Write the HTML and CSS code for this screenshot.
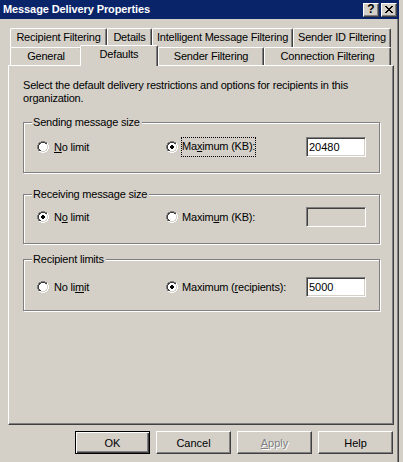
FILE: index.html
```html
<!DOCTYPE html>
<html lang="en">

<head>
    <meta charset="UTF-8">
    <title>Message Delivery Properties</title>
    <link rel="stylesheet" href="styles.css">
</head>

<body>
    <svg class="defs" width="0" height="0">
        <symbol id="radio" viewBox="0 0 12 12">
            <path fill="#808080" d="M4 0h4v1h-4z M2 1h2v1h-2z M8 1h2v1h-2z M1 2h1v2h-1z M0 4h1v4h-1z M1 8h1v2h-1z" />
            <path fill="#ffffff" d="M10 2h1v2h-1z M11 4h1v4h-1z M10 8h1v2h-1z M2 10h2v1h-2z M8 10h2v1h-2z M4 11h4v1h-4z" />
            <path fill="#404040" d="M4 1h4v1h-4z M2 2h2v1h-2z M8 2h2v1h-2z M2 3h1v1h-1z M1 4h1v4h-1z M2 8h1v1h-1z M2 9h2v1h-2z" />
            <path fill="#d4d0c8" d="M9 3h1v1h-1z M10 4h1v4h-1z M9 8h1v1h-1z M8 9h2v1h-2z M4 10h4v1h-4z" />
            <path fill="#ffffff" d="M4 2h4v1h-4z M3 3h6v1h-6z M2 4h8v4h-8z M3 8h6v1h-6z M4 9h4v1h-4z" />
        </symbol>
        <symbol id="dot" viewBox="0 0 12 12">
            <path fill="#000" d="M5 4h2v1h-2z M4 5h4v2h-4z M5 7h2v1h-2z" />
        </symbol>
    </svg>

    <div class="window">
        <div class="titlebar">
            <span class="title">Message Delivery Properties</span>
            <div class="caption-btns">
                <span class="cbtn help-btn">?</span>
                <span class="cbtn">
                    <svg width="8" height="7" viewBox="0 0 8 7" shape-rendering="crispEdges">
                        <path fill="#000" d="M0 0h2v1h-2z M6 0h2v1h-2z M1 1h2v1h-2z M5 1h2v1h-2z M2 2h4v1h-4z M3 3h2v1h-2z M2 4h4v1h-4z M1 5h2v1h-2z M5 5h2v1h-2z M0 6h2v1h-2z M6 6h2v1h-2z" />
                    </svg>
                </span>
            </div>
        </div>

        <div class="content">
            <div class="tabs">
                <div class="tab-row">
                    <div class="tab w-recip">Recipient Filtering</div>
                    <div class="tab w-details">Details</div>
                    <div class="tab w-imf">Intelligent Message Filtering</div>
                    <div class="tab w-senderid">Sender ID Filtering</div>
                </div>
                <div class="tab-row front">
                    <div class="tab w-general">General</div>
                    <div class="tab selected w-defaults">Defaults</div>
                    <div class="tab w-sender">Sender Filtering</div>
                    <div class="tab w-conn">Connection Filtering</div>
                </div>
            </div>

            <div class="panel">
                <p class="desc">Select the default delivery restrictions and options for recipients in this<br>organization.</p>

                <div class="group group-send">
                    <span class="legend">Sending message size</span>
                    <div class="group-row">
                        <label class="opt opt-first">
                            <svg class="radio" width="12" height="12" shape-rendering="crispEdges"><use href="#radio" /></svg>
                            <span><u>N</u>o limit</span>
                        </label>
                        <label class="opt opt-second">
                            <svg class="radio" width="12" height="12" shape-rendering="crispEdges"><use href="#radio" /><use href="#dot" /></svg>
                            <span class="focus">Ma<u>x</u>imum (KB):</span>
                        </label>
                        <div class="textbox">20480</div>
                    </div>
                </div>

                <div class="group group-recv">
                    <span class="legend">Receiving message size</span>
                    <div class="group-row">
                        <label class="opt opt-first">
                            <svg class="radio" width="12" height="12" shape-rendering="crispEdges"><use href="#radio" /><use href="#dot" /></svg>
                            <span>N<u>o</u> limit</span>
                        </label>
                        <label class="opt opt-second">
                            <svg class="radio" width="12" height="12" shape-rendering="crispEdges"><use href="#radio" /></svg>
                            <span class="plain">Maxim<u>u</u>m (KB):</span>
                        </label>
                        <div class="textbox disabled"></div>
                    </div>
                </div>

                <div class="group group-limits">
                    <span class="legend">Recipient limits</span>
                    <div class="group-row">
                        <label class="opt opt-first">
                            <svg class="radio" width="12" height="12" shape-rendering="crispEdges"><use href="#radio" /></svg>
                            <span>No li<u>m</u>it</span>
                        </label>
                        <label class="opt opt-second">
                            <svg class="radio" width="12" height="12" shape-rendering="crispEdges"><use href="#radio" /><use href="#dot" /></svg>
                            <span class="plain">Maximum (<u>r</u>ecipients):</span>
                        </label>
                        <div class="textbox">5000</div>
                    </div>
                </div>
            </div>

            <div class="actions">
                <button class="btn default">OK</button>
                <button class="btn">Cancel</button>
                <button class="btn disabled"><u>A</u>pply</button>
                <button class="btn">Help</button>
            </div>
        </div>
    </div>
</body>

</html>
```

FILE: styles.css
```css
body {
    margin: 0;
    background: #D4D0C8;
    font-family: "Liberation Sans", Arial, sans-serif;
    font-size: 11px;
    line-height: 13px;
    color: #000;
}

.defs {
    position: absolute;
}

.window {
    width: 403px;
    height: 462px;
    overflow: hidden;
}

.titlebar {
    width: 399px;
    height: 19px;
    box-sizing: border-box;
    background: #0A246A;
    display: flex;
    align-items: center;
    justify-content: space-between;
    padding: 0 2px 0 3px;
}

.title {
    color: #fff;
    font-weight: bold;
    letter-spacing: -0.1px;
}

.caption-btns {
    display: flex;
    gap: 2px;
}

.cbtn {
    width: 16px;
    height: 14px;
    box-sizing: border-box;
    background: #D4D0C8;
    border: 1px solid;
    border-color: #fff #404040 #404040 #fff;
    box-shadow: inset -1px -1px #808080;
    display: flex;
    align-items: center;
    justify-content: center;
}

.help-btn {
    font-weight: bold;
    font-size: 12px;
    line-height: 11px;
}

.content {
    width: 399px;
    height: 443px;
    box-sizing: border-box;
    border-right: 1px solid #404040;
    box-shadow: inset -1px 0 #808080;
    padding: 9px 0 0 8px;
}

/* tabs */

.tabs {
    padding-left: 2px;
}

.tab-row {
    display: flex;
    height: 19px;
}

.tab-row.front {
    height: 18px;
}

.tab {
    height: 19px;
    box-sizing: border-box;
    border-left: 1px solid #fff;
    border-top: 1px solid #fff;
    border-right: 1px solid #404040;
    border-radius: 2px 2px 0 0;
    box-shadow: inset -1px 0 #808080;
    padding-top: 2px;
    text-align: center;
    white-space: nowrap;
    letter-spacing: -0.2px;
}

.front .tab {
    height: 18px;
}

.tab.selected {
    position: relative;
    z-index: 1;
    height: 21px;
    margin-top: -2px;
    margin-left: -2px;
    background: #D4D0C8;
}

.w-recip { width: 97px; }
.w-details { width: 45px; }
.w-imf { width: 141px; }
.w-senderid { width: 98px; }
.w-general { width: 72px; }
.w-defaults { width: 78px; }
.w-sender { width: 106px; }
.w-conn { width: 127px; }

/* page */

.panel {
    width: 386px;
    height: 360px;
    box-sizing: border-box;
    border: 1px solid;
    border-color: #fff #404040 #404040 #fff;
    box-shadow: inset -1px -1px #808080;
    padding: 13px 0 0 14px;
}

.desc {
    margin: 0;
    white-space: nowrap;
    letter-spacing: -0.2px;
}

.group {
    position: relative;
    width: 357px;
    box-sizing: border-box;
    border: 1px solid #808080;
    box-shadow: 1px 1px 0 #fff, inset 1px 1px 0 #fff;
    padding: 14px 0 0 13px;
}

.group-send {
    margin-top: 17px;
    height: 51px;
}

.group-recv {
    margin-top: 21px;
    height: 50px;
    padding-top: 12px;
}

.group-limits {
    margin-top: 15px;
    height: 52px;
    padding-top: 17px;
}

.legend {
    position: absolute;
    top: -7px;
    left: 8px;
    padding: 0 2px 0 1px;
    background: #D4D0C8;
    letter-spacing: -0.2px;
}

.group-row {
    display: flex;
    align-items: center;
    height: 20px;
}

.opt {
    display: flex;
    align-items: center;
    gap: 5px;
    letter-spacing: -0.2px;
}

.opt-first {
    width: 129px;
}

.opt-second {
    width: 140px;
}

.radio {
    flex: none;
}

.focus {
    margin-left: -2px;
    padding: 3px 1px 4px;
    outline: 1px dotted #000;
    outline-offset: -1px;
}

.plain {
    margin-left: -1px;
}

.textbox {
    width: 60px;
    height: 20px;
    box-sizing: border-box;
    background: #fff;
    border: 1px solid;
    border-color: #808080 #fff #fff #808080;
    box-shadow: inset 1px 1px #404040, inset -1px -1px #D4D0C8;
    padding: 3px 0 0 2px;
}

.textbox.disabled {
    background: #D4D0C8;
}

/* buttons */

.actions {
    width: 385px;
    display: flex;
    justify-content: flex-end;
    gap: 6px;
    margin-top: 6px;
}

.btn {
    width: 75px;
    height: 23px;
    margin: 0;
    padding: 0;
    box-sizing: border-box;
    background: #D4D0C8;
    border: 1px solid;
    border-color: #fff #404040 #404040 #fff;
    box-shadow: inset -1px -1px #808080;
    font-family: "Liberation Sans", Arial, sans-serif;
    font-size: 11px;
    color: #000;
}

.btn.default {
    border: 1px solid #000;
    box-shadow: inset 1px 1px #fff, inset -1px -1px #404040, inset -2px -2px #808080;
}

.btn.disabled {
    color: #808080;
    text-shadow: 1px 1px 0 #fff;
}
```
